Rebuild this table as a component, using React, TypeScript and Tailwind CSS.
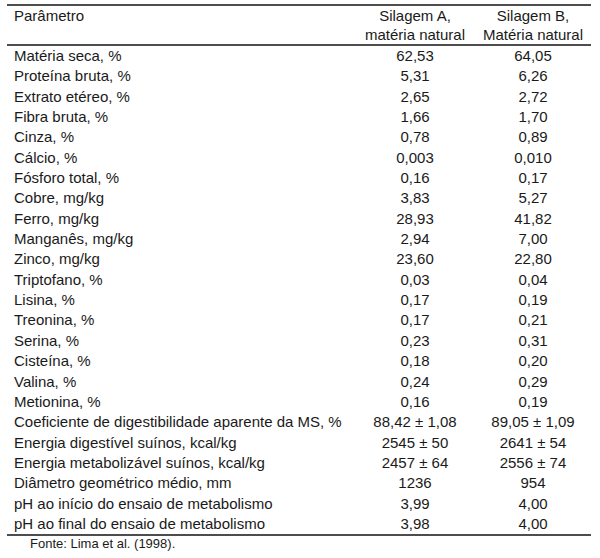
import React from "react";

const rows: [string, string, string][] = [
  ["Matéria seca, %", "62,53", "64,05"],
  ["Proteína bruta, %", "5,31", "6,26"],
  ["Extrato etéreo, %", "2,65", "2,72"],
  ["Fibra bruta, %", "1,66", "1,70"],
  ["Cinza, %", "0,78", "0,89"],
  ["Cálcio, %", "0,003", "0,010"],
  ["Fósforo total, %", "0,16", "0,17"],
  ["Cobre, mg/kg", "3,83", "5,27"],
  ["Ferro, mg/kg", "28,93", "41,82"],
  ["Manganês, mg/kg", "2,94", "7,00"],
  ["Zinco, mg/kg", "23,60", "22,80"],
  ["Triptofano, %", "0,03", "0,04"],
  ["Lisina, %", "0,17", "0,19"],
  ["Treonina, %", "0,17", "0,21"],
  ["Serina, %", "0,23", "0,31"],
  ["Cisteína, %", "0,18", "0,20"],
  ["Valina, %", "0,24", "0,29"],
  ["Metionina, %", "0,16", "0,19"],
  ["Coeficiente de digestibilidade aparente da MS, %", "88,42 ± 1,08", "89,05 ± 1,09"],
  ["Energia digestível suínos, kcal/kg", "2545 ± 50", "2641 ± 54"],
  ["Energia metabolizável suínos, kcal/kg", "2457 ± 64", "2556 ± 74"],
  ["Diâmetro geométrico médio, mm", "1236", "954"],
  ["pH ao início do ensaio de metabolismo", "3,99", "4,00"],
  ["pH ao final do ensaio de metabolismo", "3,98", "4,00"],
];

export default function App() {
  return (
    <div
      className="w-[600px] h-[558px] bg-white text-[#1a1a1a] overflow-hidden pt-[4px] pl-[7px]"
      style={{ fontFamily: '"Liberation Sans", Arial, sans-serif' }}
    >
      <div className="w-[584px] border-t-2 border-b-2 border-[#4d4d4d] text-[15px]">
        <div className="grid grid-cols-[348px_120px_116px] border-b-2 border-[#4d4d4d] h-[40px] leading-[19px]">
          <div className="pl-[7px]">Parâmetro</div>
          <div className="text-center whitespace-nowrap">
            Silagem A,
            <br />
            matéria natural
          </div>
          <div className="text-center whitespace-nowrap">
            Silagem B,
            <br />
            Matéria natural
          </div>
        </div>
        {rows.map(([label, a, b]) => (
          <div
            key={label}
            className="grid grid-cols-[348px_120px_116px] h-[20.35px] leading-[20.35px]"
          >
            <div className="pl-[7px] whitespace-nowrap">{label}</div>
            <div className="text-center whitespace-nowrap">{a}</div>
            <div className="text-center whitespace-nowrap">{b}</div>
          </div>
        ))}
      </div>
      <div className="pl-[23px] text-[13px] leading-[15px]">
        Fonte: Lima et al. (1998).
      </div>
    </div>
  );
}
